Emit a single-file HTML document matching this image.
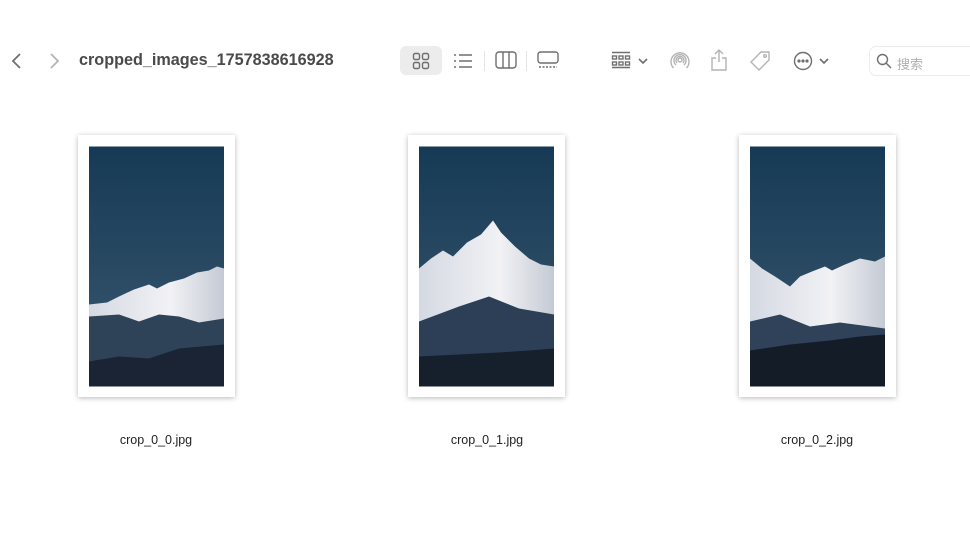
<!DOCTYPE html>
<html><head><meta charset="utf-8"><style>
body{margin:0;width:970px;height:536px;background:#fff;font-family:"Liberation Sans","Noto Sans CJK SC",sans-serif;position:relative;overflow:hidden}
.a{position:absolute}
.title{left:79px;top:51px;font-size:16.2px;font-weight:bold;color:#4a4a4a}
.frame{position:absolute;top:135px;width:157px;height:262px;background:#fff;box-shadow:0 1px 5px rgba(0,0,0,.28)}
.frame svg{position:absolute;left:11px;top:11px}
.lbl{position:absolute;top:433px;font-size:12.5px;color:#222;width:160px;text-align:center}
.ic{position:absolute;stroke:#6f6f6f;fill:none;stroke-width:1.4}
.lt{stroke:#b4b4b4}
</style></head><body>
<svg class="ic" style="left:10px;top:52px" width="14" height="18"><path d="M10 2 L3 9 L10 16" stroke-width="1.8"/></svg>
<svg class="ic lt" style="left:47px;top:52px" width="14" height="18"><path d="M4 2 L11 9 L4 16" stroke-width="1.8"/></svg>
<div class="a title">cropped_images_1757838616928</div>
<div class="a" style="left:400px;top:46px;width:42px;height:29px;background:#ececec;border-radius:6px"></div>
<svg class="ic" style="left:412px;top:52px" width="18" height="18"><rect x="1.5" y="1.5" width="6" height="6" rx="1.5"/><rect x="10.5" y="1.5" width="6" height="6" rx="1.5"/><rect x="1.5" y="10.5" width="6" height="6" rx="1.5"/><rect x="10.5" y="10.5" width="6" height="6" rx="1.5"/></svg>
<svg class="ic" style="left:453px;top:52px" width="20" height="18"><path d="M6 3H19M6 9H19M6 15H19M1 3H3M1 9H3M1 15H3"/></svg>
<div class="a" style="left:484px;top:51px;width:1px;height:20px;background:#e4e4e4"></div>
<svg class="ic" style="left:495px;top:51px" width="22" height="18"><rect x="1" y="1" width="20" height="16" rx="3"/><path d="M8 1V17M14 1V17"/></svg>
<div class="a" style="left:526px;top:51px;width:1px;height:20px;background:#e4e4e4"></div>
<svg class="ic" style="left:537px;top:51px" width="22" height="18"><rect x="1" y="1" width="20" height="11" rx="2.5"/><path d="M2 16H20" stroke-dasharray="2 1.5"/></svg>
<svg class="ic" style="left:611px;top:51px" width="20" height="18"><path d="M1 1.5H19M1 16.5H19"/><rect x="1.5" y="5" width="4" height="3"/><rect x="8" y="5" width="4" height="3"/><rect x="14.5" y="5" width="4" height="3"/><rect x="1.5" y="11" width="4" height="3"/><rect x="8" y="11" width="4" height="3"/><rect x="14.5" y="11" width="4" height="3"/></svg>
<svg class="ic" style="left:638px;top:57px" width="10" height="8"><path d="M1 2L5 6L9 2" stroke-width="1.6"/></svg>
<svg class="ic lt" style="left:670px;top:51px" width="20" height="20"><circle cx="10" cy="9" r="2"/><path d="M6 14A6 6 0 1 1 14 14M3.5 17A9 9 0 1 1 16.5 17M7 12A4 4 0 1 1 13 12"/></svg>
<svg class="ic lt" style="left:710px;top:49px" width="18" height="22"><path d="M9 1V13M5 5L9 1L13 5M6 9H2V21H16V9H12"/></svg>
<svg class="ic lt" style="left:749px;top:50px" width="22" height="22"><path d="M12 2H20V10L10 20L2 12Z"/><circle cx="16" cy="6" r="1.3"/></svg>
<svg class="ic" style="left:793px;top:51px" width="20" height="20"><circle cx="10" cy="10" r="8.5"/><circle cx="6" cy="10" r=".9" fill="#6f6f6f"/><circle cx="10" cy="10" r=".9" fill="#6f6f6f"/><circle cx="14" cy="10" r=".9" fill="#6f6f6f"/></svg>
<svg class="ic" style="left:819px;top:57px" width="10" height="8"><path d="M1 2L5 6L9 2" stroke-width="1.6"/></svg>
<div class="a" style="left:869px;top:46px;width:110px;height:28px;border:1px solid #ececec;border-radius:7px"></div>
<svg class="ic" style="left:876px;top:53px" width="16" height="16"><circle cx="6.5" cy="6.5" r="5"/><path d="M10 10L15 15"/></svg>
<div class="a" style="left:897px;top:54px;font-size:13px;color:#b0b0b0">搜索</div>

<svg width="0" height="0" style="position:absolute"><defs><linearGradient id="sk" x1="0" y1="0" x2="0" y2="1"><stop offset="0" stop-color="#163a55"/><stop offset="1" stop-color="#3c5870"/></linearGradient><linearGradient id="sn" x1="0" y1="0" x2="1" y2="0"><stop offset="0" stop-color="#d4d9e2"/><stop offset=".6" stop-color="#f2f2f5"/><stop offset="1" stop-color="#c4cad4"/></linearGradient></defs></svg>

<div class="frame" style="left:78px"><svg width="135" height="241" viewBox="0 0 135 240">
<rect width="135" height="240" fill="url(#sk)"/>
<polygon points="0,158 18,156 30,150 45,143 60,138 68,142 80,136 95,132 108,126 120,124 128,120 135,122 135,180 0,190" fill="url(#sn)"/>
<polygon points="0,170 30,168 50,175 70,168 90,170 110,176 135,172 135,240 0,240" fill="#2e4258"/>
<polygon points="0,215 30,210 60,212 90,202 135,198 135,240 0,240" fill="#1a2434"/></svg></div>

<div class="frame" style="left:408px"><svg width="135" height="241" viewBox="0 0 135 240">
<rect width="135" height="240" fill="url(#sk)"/>
<polygon points="0,122 12,112 24,104 34,110 48,96 62,88 74,74 82,86 96,100 110,112 122,118 135,120 135,190 0,190" fill="url(#sn)"/>
<polygon points="0,175 40,160 70,150 100,162 135,168 135,240 0,240" fill="#2d3f56"/>
<polygon points="0,210 40,208 80,206 110,204 135,202 135,240 0,240" fill="#161f2c"/></svg></div>

<div class="frame" style="left:739px"><svg width="135" height="241" viewBox="0 0 135 240">
<rect width="135" height="240" fill="url(#sk)"/>
<polygon points="0,112 12,122 25,130 40,140 50,130 62,125 75,120 82,124 95,118 110,112 125,115 135,110 135,190 0,190" fill="url(#sn)"/>
<polygon points="0,175 30,168 60,180 90,176 135,182 135,240 0,240" fill="#30425a"/>
<polygon points="0,204 40,198 80,194 110,190 135,188 135,240 0,240" fill="#141c28"/></svg></div>

<div class="lbl" style="left:76px">crop_0_0.jpg</div>
<div class="lbl" style="left:407px">crop_0_1.jpg</div>
<div class="lbl" style="left:737px">crop_0_2.jpg</div>
</body></html>
